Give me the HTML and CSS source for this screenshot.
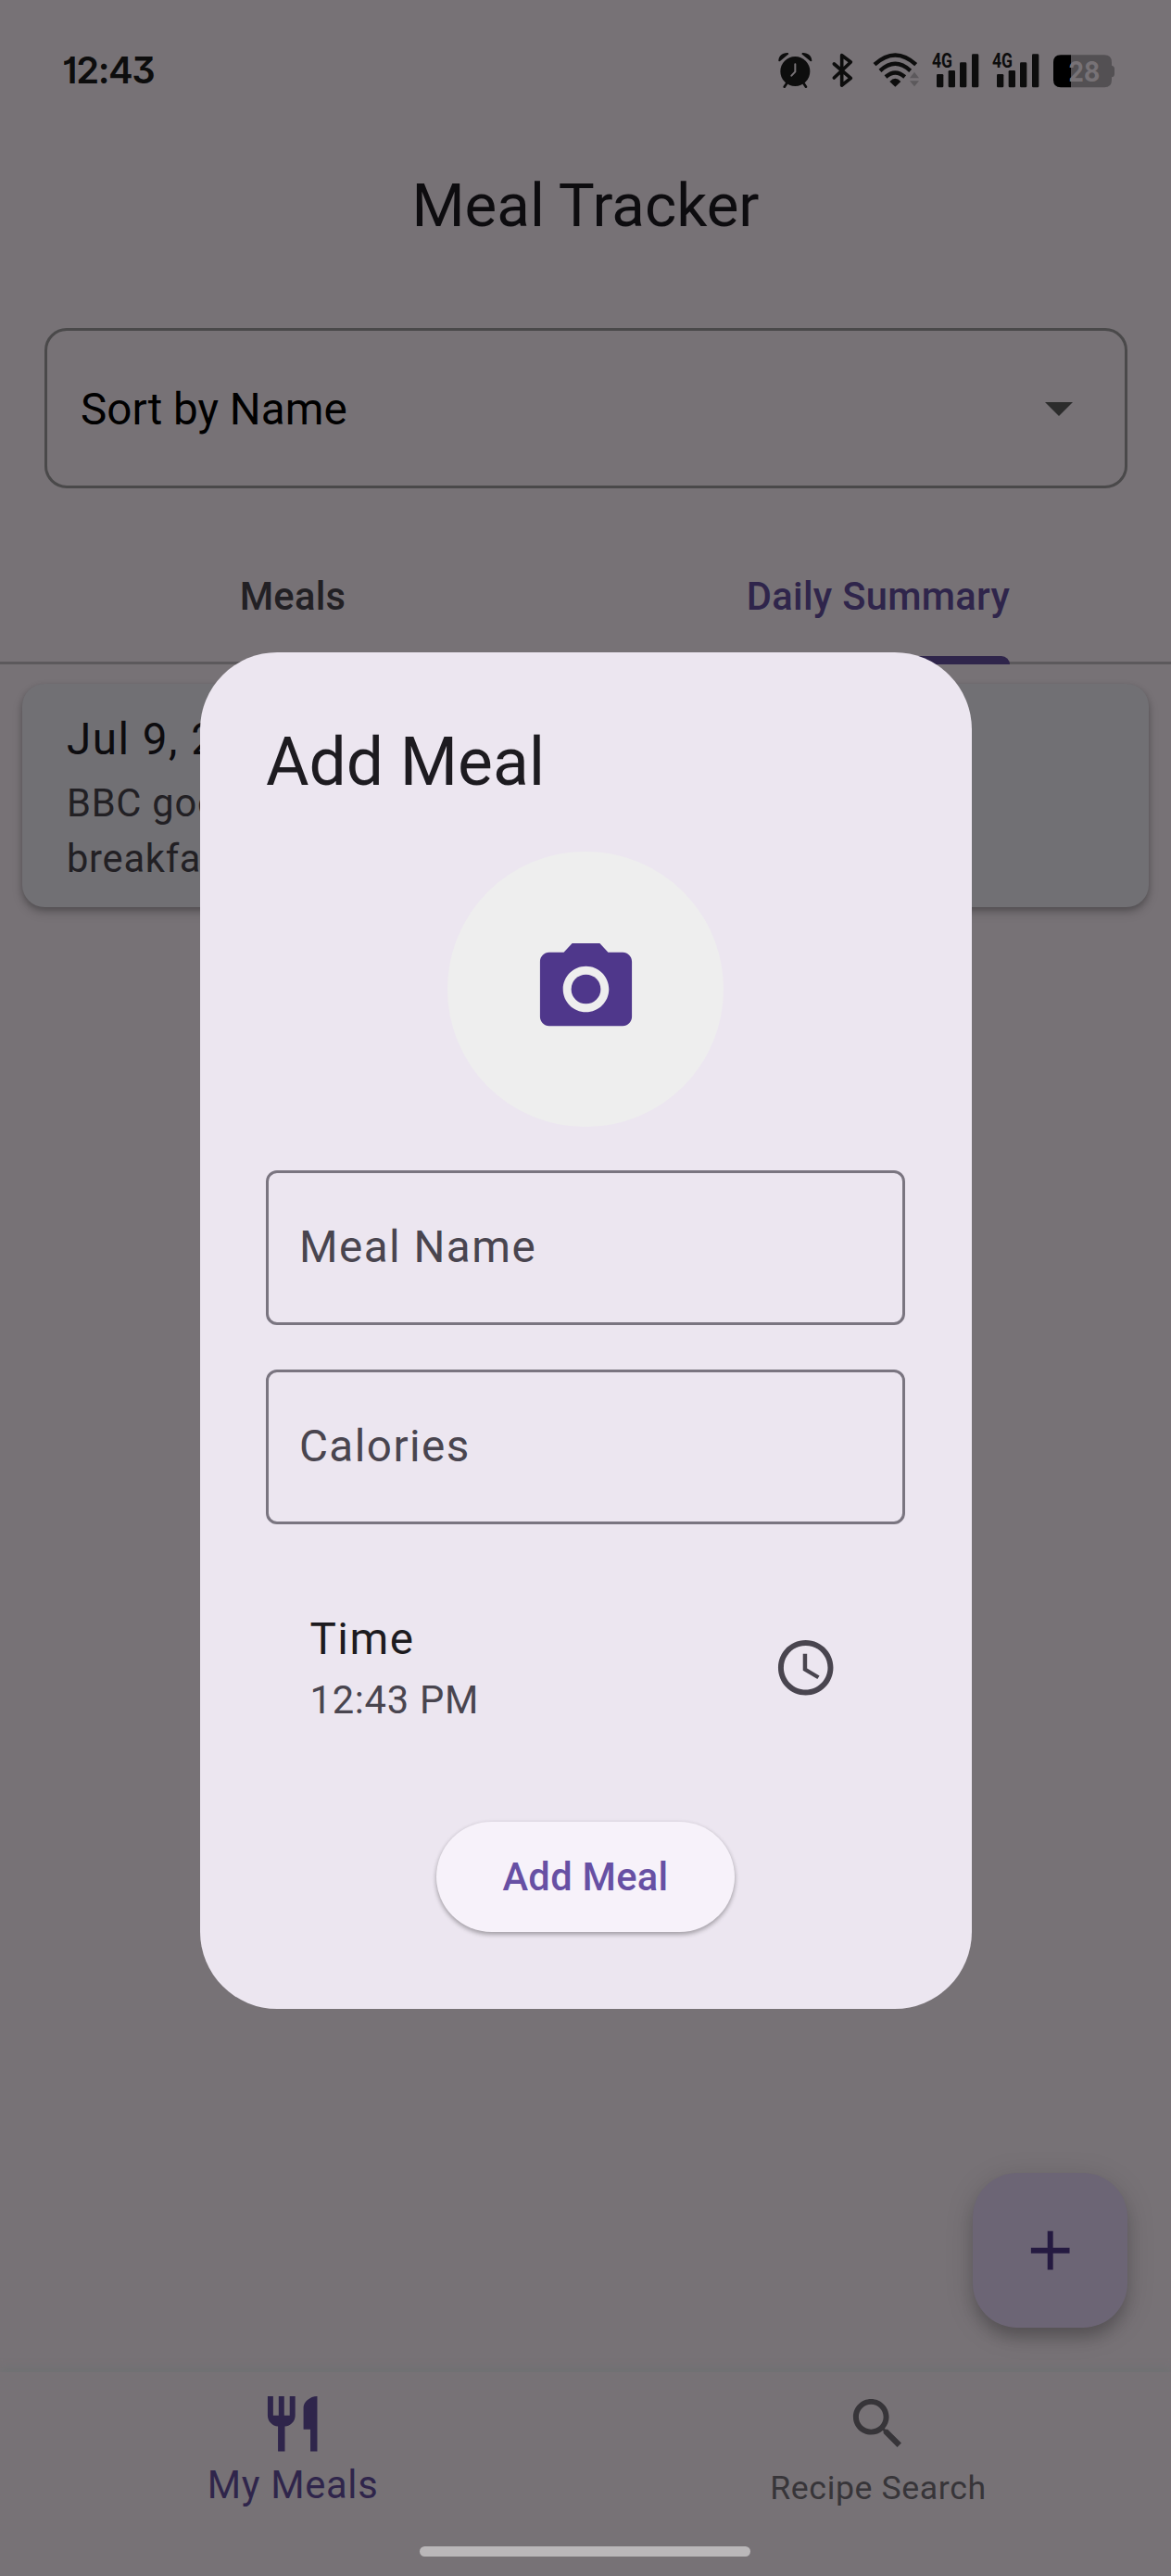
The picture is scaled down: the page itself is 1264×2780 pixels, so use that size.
FILE: index.html
```html
<!DOCTYPE html>
<html lang="en">
<head>
<meta charset="utf-8">
<title>Meal Tracker</title>
<link rel="stylesheet" href="styles.css">
</head>
<body>
<div class="screen">
  <header class="status">
    <span class="clock">12:43</span>
    <svg class="status-icons" viewBox="0 0 1110 120" fill="#0d0d0d">
      <g class="alarm">
        <circle cx="55" cy="66" r="48"/>
        <path d="M1 33C1 16 13 5 32 6L34 10L5 34ZM109 33C109 16 97 5 78 6L76 10L105 34Z"/>
        <path d="M28 104L20 116M82 104L90 116" stroke="#0d0d0d" stroke-width="8" stroke-linecap="round"/>
        <path d="M55 43V67L43 80" fill="none" stroke="#777276" stroke-width="6" stroke-linecap="round"/>
      </g>
      <path d="M181 42L235 88L206 111V14L235 36L181 87" fill="none" stroke="#0d0d0d" stroke-width="11" stroke-linecap="round" stroke-linejoin="round"/>
      <g fill="none" stroke="#0d0d0d" stroke-width="13">
        <path d="M312 44Q379 -17 446 44"/>
        <path d="M330 64Q379 19 428 64"/>
        <path d="M348 84Q379 57 410 84"/>
      </g>
      <path d="M361 99Q379 80 397 99L379 116Z"/>
      <path d="M441 68L456 88H426ZM441 115L426 97H456Z" fill="#5c595c"/>
      <g>
        <text class="net" x="498" y="53" textLength="66" lengthAdjust="spacingAndGlyphs">4G</text>
        <rect x="513" y="75" width="22" height="43" rx="4"/>
        <rect x="551" y="63" width="22" height="55" rx="4"/>
        <rect x="588" y="37" width="22" height="81" rx="4"/>
        <rect x="627" y="10" width="22" height="108" rx="4"/>
      </g>
      <g transform="translate(195 0)">
        <text class="net" x="498" y="53" textLength="66" lengthAdjust="spacingAndGlyphs">4G</text>
        <rect x="513" y="75" width="22" height="43" rx="4"/>
        <rect x="551" y="63" width="22" height="55" rx="4"/>
        <rect x="588" y="37" width="22" height="81" rx="4"/>
        <rect x="627" y="10" width="22" height="108" rx="4"/>
      </g>
      <path d="M948 13H1056Q1080 13 1080 37V47Q1089 49 1089 58V74Q1089 83 1080 85V94Q1080 118 1056 118H948Z" fill="#535053"/>
      <path d="M948 13H915Q891 13 891 37V94Q891 118 915 118H948Z" fill="#000"/>
      <text class="level" x="940" y="98" textLength="102" lengthAdjust="spacingAndGlyphs">28</text>
    </svg>
  </header>

  <h1 class="title">Meal Tracker</h1>

  <div class="select">
    <span>Sort by Name</span>
    <svg class="caret" viewBox="0 0 10 5"><path d="M0 0L5 5L10 0Z"/></svg>
  </div>

  <nav class="tabs">
    <div class="tab">Meals</div>
    <div class="tab active"><span class="tab-label">Daily Summary</span></div>
  </nav>

  <main class="content">
    <article class="card">
      <div class="card-title">Jul 9, 2025</div>
      <div class="card-text">BBC good<br>breakfast</div>
    </article>
    <button class="fab" aria-label="Add">
      <svg viewBox="0 0 24 24"><path d="M19 13h-6v6h-2v-6H5v-2h6V5h2v6h6v2z"/></svg>
    </button>
  </main>

  <footer class="bottom-nav">
    <div class="nav-item current">
      <svg viewBox="0 0 24 24"><path d="M11 9H9V2H7v7H5V2H3v7c0 2.12 1.66 3.84 3.75 3.97V22h2.5v-9.03C11.34 12.84 13 11.12 13 9V2h-2v7zm5-3v8h2.5v8H21V2c-2.76 0-5 2.24-5 4z"/></svg>
      <span>My Meals</span>
    </div>
    <div class="nav-item">
      <svg viewBox="0 0 24 24"><path d="M15.5 14h-.79l-.28-.27C15.41 12.59 16 11.11 16 9.5 16 5.91 13.09 3 9.5 3S3 5.91 3 9.5 5.91 16 9.5 16c1.61 0 3.09-.59 4.23-1.57l.27.28v.79l5 4.99L20.49 19l-4.99-5zm-6 0C7.01 14 5 11.99 5 9.5S7.01 5 9.5 5 14 7.01 14 9.5 11.99 14 9.5 14z"/></svg>
      <span>Recipe Search</span>
    </div>
  </footer>
  <div class="home-bar"></div>

  <section class="dialog" role="dialog">
    <h2 class="dialog-title">Add Meal</h2>
    <div class="photo">
      <svg viewBox="0 0 24 24"><circle cx="12" cy="12" r="3.2"/><path d="M9 2L7.17 4H4c-1.1 0-2 .9-2 2v12c0 1.1.9 2 2 2h16c1.1 0 2-.9 2-2V6c0-1.1-.9-2-2-2h-3.17L15 2H9zm3 15c-2.76 0-5-2.24-5-5s2.24-5 5-5 5 2.24 5 5-2.24 5-5 5z"/></svg>
    </div>
    <div class="field">Meal Name</div>
    <div class="field">Calories</div>
    <div class="time-row">
      <div>
        <div class="time-label">Time</div>
        <div class="time-value">12:43 PM</div>
      </div>
      <svg viewBox="0 0 24 24"><path d="M11.99 2C6.47 2 2 6.48 2 12s4.47 10 9.99 10C17.52 22 22 17.52 22 12S17.52 2 11.99 2zM12 20c-4.42 0-8-3.58-8-8s3.58-8 8-8 8 3.58 8 8-3.58 8-8 8zm.5-13H11v6l5.25 3.15.75-1.23-4.5-2.67z"/></svg>
    </div>
    <button class="submit">Add Meal</button>
  </section>
</div>
</body>
</html>
```
FILE: styles.css
```css
* { box-sizing: border-box; }

body {
  margin: 0;
  background: #777276;
  font-family: Roboto, "Liberation Sans", sans-serif;
}

button { border: 0; padding: 0; font: inherit; }
svg { display: block; flex: none; }

.screen {
  position: relative;
  display: flex;
  flex-direction: column;
  width: 1264px;
  height: 2780px;
  overflow: hidden;
}

/* Status bar */
.status {
  display: flex;
  justify-content: space-between;
  align-items: flex-start;
  height: 138px;
  padding: 55px 54px 0 67px;
}
.clock {
  font: 600 40px/42px Inter, sans-serif;
  font-feature-settings: "cv09", "cv01";
  letter-spacing: -1.4px;
  color: #0d0d0d;
}
.status-icons { width: 370px; height: 40px; overflow: visible; }
.net { font: 700 66px Roboto, sans-serif; }
.level { font: 700 90px Inter, sans-serif; fill: #777276; }

.title {
  margin: 0;
  font-size: 65.45px;
  font-weight: 400;
  line-height: 167px;
  text-align: center;
  color: #0d0c0f;
}

/* Sort selector */
.select {
  display: flex;
  justify-content: space-between;
  align-items: center;
  height: 173px;
  margin: 49px 47px 0 48px;
  padding: 2px 56px 0 36px;
  border: 3px solid #4a494a;
  border-radius: 24px;
  font-size: 47.6px;
  color: #000;
}
.caret { width: 30px; height: 15px; fill: #2c2c2c; }

/* Tabs */
.tabs {
  display: flex;
  height: 143px;
  margin-top: 47px;
  border-bottom: 3px solid #5c595c;
  font-size: 41.65px;
  font-weight: 500;
  letter-spacing: 0.3px;
  color: #222024;
}
.tab {
  display: flex;
  flex: 1;
  justify-content: center;
  height: 143px;
  line-height: 140px;
}
.tab.active { color: #2f254b; }
.tab-label {
  display: flex;
  flex-direction: column;
}
.tab-label::after {
  content: "";
  height: 9px;
  margin-top: -6px;
  border-radius: 9px 9px 0 0;
  background: #2f254b;
}

/* Summary list */
.content {
  display: flex;
  flex: 1;
  flex-direction: column;
  justify-content: space-between;
  align-items: flex-end;
  padding: 21px 24px 48px;
}
.card {
  width: 100%;
  height: 241px;
  padding: 25px 47px 0 48px;
  border-radius: 24px;
  background: #717074;
  box-shadow: 0 3px 6px rgba(0, 0, 0, .2), 0 6px 12px rgba(0, 0, 0, .16);
}
.card-title {
  font-size: 47.6px;
  line-height: 71px;
  letter-spacing: 1.49px;
  color: #0d0c0f;
}
.card-text {
  margin-top: 3px;
  font-size: 41.65px;
  line-height: 59.5px;
  letter-spacing: 0.74px;
  color: #222024;
}
.fab {
  display: grid;
  place-items: center;
  width: 167px;
  height: 167px;
  margin-right: 23px;
  border-radius: 48px;
  background: #6c6575;
  box-shadow: 0 12px 16px -2px rgba(0, 0, 0, .2), 0 6px 32px rgba(0, 0, 0, .14);
}
.fab svg { width: 71.4px; height: 71.4px; fill: #251a41; }

/* Bottom navigation */
.bottom-nav {
  display: flex;
  height: 220px;
  padding-top: 20px;
  background: #777276;
  box-shadow: 0 -7px 7px rgba(104, 112, 112, .38);
}
.nav-item {
  display: flex;
  flex: 1;
  flex-direction: column;
  align-items: center;
  font-size: 35.7px;
  line-height: 69px;
  letter-spacing: 0.6px;
  color: #373539;
}
.nav-item svg { width: 71.4px; height: 71.4px; fill: currentColor; }
.nav-item.current {
  font-size: 41.65px;
  line-height: 61px;
  letter-spacing: 0.7px;
  color: #2f254b;
}
.home-bar {
  position: absolute;
  left: 453px;
  bottom: 21px;
  width: 357px;
  height: 11px;
  border-radius: 6px;
  background: #bab7b9;
}

/* Add meal dialog */
.dialog {
  position: absolute;
  top: 704.3px;
  left: 215.5px;
  display: flex;
  flex-direction: column;
  align-items: center;
  width: 833px;
  height: 1463.3px;
  padding: 71px 71.4px 0;
  border-radius: 83.3px;
  background: #ece6f0;
}
.dialog-title {
  align-self: stretch;
  margin: 0;
  font-size: 71.4px;
  font-weight: 400;
  line-height: 95.2px;
  color: #1d1b20;
}
.photo {
  display: grid;
  flex: none;
  place-items: center;
  width: 297.5px;
  height: 297.5px;
  margin: 48px 0 47px;
  border-radius: 50%;
  background: #eee;
}
.photo svg { width: 119px; height: 119px; fill: #4f378b; }
.field {
  align-self: stretch;
  flex: none;
  height: 167px;
  margin-bottom: 47.5px;
  padding-left: 33px;
  border: 3px solid #7a7580;
  border-radius: 12px;
  font-size: 47.6px;
  line-height: 160px;
  letter-spacing: 1.49px;
  color: #49454f;
}
.time-row {
  display: flex;
  align-self: stretch;
  justify-content: space-between;
  align-items: center;
  height: 215px;
  padding: 0 71.4px 0 47.6px;
  color: #49454f;
}
.time-row svg { width: 71.4px; height: 71.4px; fill: currentColor; }
.time-label {
  font-size: 47.6px;
  line-height: 71px;
  letter-spacing: 1.49px;
  color: #1d1b20;
}
.time-value {
  font-size: 41.65px;
  line-height: 59.5px;
  letter-spacing: 0.74px;
}
.submit {
  width: 322px;
  height: 119px;
  margin-top: 59px;
  border-radius: 60px;
  background: #f7f2fa;
  box-shadow: 0 3px 5px rgba(0, 0, 0, .24), 0 1px 5px rgba(0, 0, 0, .12);
  font-size: 41.65px;
  font-weight: 500;
  letter-spacing: 0.3px;
  color: #6750a4;
}
```
